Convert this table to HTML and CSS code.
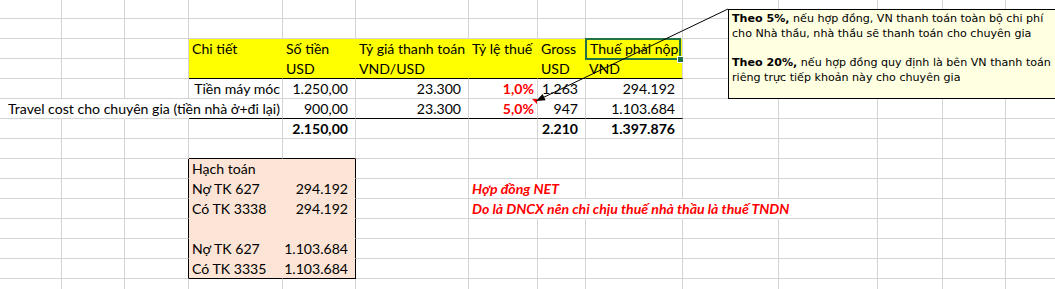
FILE: index.html
```html
<!DOCTYPE html>
<html lang="vi">
<head>
<meta charset="utf-8">
<title>Sheet</title>
<link rel="stylesheet" href="styles.css">
</head>
<body>
<div class="sheet">
  <!-- row 1 -->
  <div class="c"></div><div class="c"></div><div class="c"></div><div class="c"></div><div class="c"></div><div class="c"></div><div class="c"></div><div class="c"></div><div class="c"></div><div class="c"></div><div class="c"></div><div class="c"></div><div class="c"></div><div class="c"></div>
  <!-- row 2 -->
  <div class="c"></div><div class="c"></div><div class="c"></div><div class="c"></div><div class="c"></div><div class="c"></div><div class="c"></div><div class="c"></div><div class="c"></div><div class="c"></div><div class="c"></div><div class="c"></div><div class="c"></div><div class="c"></div>
  <!-- row 3 header -->
  <div class="c"></div><div class="c"></div><div class="c"></div>
  <div class="c y">Chi tiết</div><div class="c y">Số tiền</div><div class="c y">Tỷ giá thanh toán</div><div class="c y">Tỷ lệ thuế</div><div class="c y">Gross</div><div class="c y yl sel">Thuế phải nộp</div>
  <div class="c"></div><div class="c"></div><div class="c"></div><div class="c"></div><div class="c"></div>
  <!-- row 4 header -->
  <div class="c"></div><div class="c"></div><div class="c"></div>
  <div class="c y bb"></div><div class="c y bb">USD</div><div class="c y bb">VND/USD</div><div class="c y bb"></div><div class="c y bb">USD</div><div class="c y bb yl">VND</div>
  <div class="c"></div><div class="c"></div><div class="c"></div><div class="c"></div><div class="c"></div>
  <!-- row 5 -->
  <div class="c"></div><div class="c"></div><div class="c"></div>
  <div class="c r">Tiền máy móc</div><div class="c n">1.250,00</div><div class="c n">23.300</div><div class="c pct red">1,0%</div><div class="c n">1.263</div><div class="c n">294.192</div>
  <div class="c"></div><div class="c"></div><div class="c"></div><div class="c"></div><div class="c"></div>
  <!-- row 6 -->
  <div class="c nr"></div><div class="c nr"></div><div class="c nr"></div>
  <div class="c r bb">Travel cost cho chuyên gia (tiền nhà ở+đi lại)</div><div class="c n bb">900,00</div><div class="c n bb">23.300</div><div class="c pct red bb flag">5,0%</div><div class="c n bb">947</div><div class="c n bb">1.103.684</div>
  <div class="c"></div><div class="c"></div><div class="c"></div><div class="c"></div><div class="c"></div>
  <!-- row 7 totals -->
  <div class="c"></div><div class="c"></div><div class="c"></div>
  <div class="c"></div><div class="c n b">2.150,00</div><div class="c"></div><div class="c"></div><div class="c n b">2.210</div><div class="c n b">1.397.876</div>
  <div class="c"></div><div class="c"></div><div class="c"></div><div class="c"></div><div class="c"></div>
  <!-- row 8 -->
  <div class="c"></div><div class="c"></div><div class="c"></div>
  <div class="c bb"></div><div class="c bb"></div>
  <div class="c"></div><div class="c"></div><div class="c"></div><div class="c"></div><div class="c"></div><div class="c"></div><div class="c"></div><div class="c"></div><div class="c"></div>
  <!-- row 9 -->
  <div class="c"></div><div class="c"></div><div class="c rb"></div>
  <div class="c pk">Hạch toán</div><div class="c pk pke"></div>
  <div class="c"></div><div class="c"></div><div class="c"></div><div class="c"></div><div class="c"></div><div class="c"></div><div class="c"></div><div class="c"></div><div class="c"></div>
  <!-- row 10 -->
  <div class="c"></div><div class="c"></div><div class="c rb"></div>
  <div class="c pk">Nợ TK 627</div><div class="c pk pke n">294.192</div>
  <div class="c"></div><div class="c nr note-text">Hợp đồng NET</div><div class="c"></div><div class="c"></div><div class="c"></div><div class="c"></div><div class="c"></div><div class="c"></div><div class="c"></div>
  <!-- row 11 -->
  <div class="c"></div><div class="c"></div><div class="c rb"></div>
  <div class="c pk">Có TK 3338</div><div class="c pk pke n">294.192</div>
  <div class="c"></div><div class="c nr note-text">Do là DNCX nên chỉ chịu thuế nhà thầu là thuế TNDN</div><div class="c nr"></div><div class="c nr"></div><div class="c nr"></div><div class="c"></div><div class="c"></div><div class="c"></div><div class="c"></div>
  <!-- row 12 -->
  <div class="c"></div><div class="c"></div><div class="c rb"></div>
  <div class="c pk"></div><div class="c pk pke"></div>
  <div class="c"></div><div class="c"></div><div class="c"></div><div class="c"></div><div class="c"></div><div class="c"></div><div class="c"></div><div class="c"></div><div class="c"></div>
  <!-- row 13 -->
  <div class="c"></div><div class="c"></div><div class="c rb"></div>
  <div class="c pk">Nợ TK 627</div><div class="c pk pke n">1.103.684</div>
  <div class="c"></div><div class="c"></div><div class="c"></div><div class="c"></div><div class="c"></div><div class="c"></div><div class="c"></div><div class="c"></div><div class="c"></div>
  <!-- row 14 -->
  <div class="c"></div><div class="c"></div><div class="c rb"></div>
  <div class="c pk bb">Có TK 3335</div><div class="c pk pke bb n">1.103.684</div>
  <div class="c"></div><div class="c"></div><div class="c"></div><div class="c"></div><div class="c"></div><div class="c"></div><div class="c"></div><div class="c"></div><div class="c"></div>
  <!-- row 15 -->
  <div class="c"></div><div class="c"></div><div class="c"></div><div class="c"></div><div class="c"></div><div class="c"></div><div class="c"></div><div class="c"></div><div class="c"></div><div class="c"></div><div class="c"></div><div class="c"></div><div class="c"></div><div class="c"></div>

  <svg class="arrow" width="1055" height="289" viewBox="0 0 1055 289" aria-hidden="true">
    <line x1="728" y1="9" x2="541" y2="98.6" stroke="#000" stroke-width="1"/>
    <polygon points="536,101 545.6,100.3 542.6,94" fill="#000"/>
  </svg>

  <div class="comment">
    <p><b>Theo 5%,</b> nếu hợp đồng, VN thanh toán toàn bộ chi phí cho Nhà thầu, nhà thầu sẽ thanh toán cho chuyên gia</p>
    <p><b>Theo 20%,</b> nếu hợp đồng quy định là bên VN thanh toán riêng trực tiếp khoản này cho chuyên gia</p>
  </div>
</div>
</body>
</html>
```

FILE: styles.css
```css
html, body {
  margin: 0;
  padding: 0;
  background: #ffffff;
  overflow: hidden;
}

.sheet {
  position: relative;
  display: grid;
  grid-template-columns: 62px 63px 64px 94px 73px 113px 69px 48px 97px 96px 99px 65px 63px 64px;
  grid-template-rows: 19px repeat(14, 20px);
  width: max-content;
  font-family: Lato, "Liberation Sans", sans-serif;
  font-size: 14.1px;
  color: #000;
}

.c {
  box-sizing: border-box;
  min-width: 0;
  border-right: 1px solid #d4d4d4;
  border-bottom: 1px solid #d4d4d4;
  display: flex;
  align-items: flex-end;
  padding: 0 2px 1px 3px;
  line-height: 17px;
  white-space: nowrap;
}

/* yellow header */
.y {
  background: #ffff00;
  border-right-color: #ffff00;
  border-bottom-color: #ffff00;
}
.yl {
  border-right-color: #d4d4d4;
}

/* borders */
.bb { border-bottom-color: #000; }
.nr { border-right-color: transparent; }
.rb { border-right-color: #000; }

/* alignment */
.r { justify-content: flex-end; padding-right: 2px; }
.n { justify-content: flex-end; padding-right: 7px; }
.pct { justify-content: flex-end; padding-right: 3px; }
.b { font-weight: 700; }
.red { color: #ff0000; font-weight: 700; }

/* peach ledger box */
.pk {
  background: #fce4d6;
  border-right-color: #fce4d6;
  border-bottom-color: #fce4d6;
}
.pk.pke { border-right-color: #000; }
.pk.bb { border-bottom-color: #000; }

.note-text {
  color: #ff0000;
  font-weight: 700;
  font-style: italic;
  padding-left: 3px;
}

/* comment indicator */
.flag { position: relative; }
.flag::after {
  content: "";
  position: absolute;
  top: 0;
  right: 0;
  border-left: 5px solid transparent;
  border-top: 5px solid #ff0000;
}

/* active cell selection */
.sel { position: relative; padding-left: 4px; }
.sel::after {
  content: "";
  position: absolute;
  left: -1px;
  top: -1px;
  width: 96px;
  height: 22px;
  box-sizing: border-box;
  border: 2px solid #217346;
}
.sel::before {
  content: "";
  position: absolute;
  left: 92px;
  top: 18px;
  width: 5px;
  height: 5px;
  background: #217346;
  box-shadow: 0 0 0 1px #ffffff;
  z-index: 2;
}

.arrow {
  position: absolute;
  left: 0;
  top: 0;
  pointer-events: none;
}

.comment {
  position: absolute;
  left: 728px;
  top: 9px;
  width: 340px;
  height: 90px;
  box-sizing: border-box;
  border: 1px solid #000;
  background: #ffffe1;
  padding: 2px 3px 0;
  font-family: "DejaVu Sans", Verdana, sans-serif;
  font-size: 11.1px;
  line-height: 14.75px;
  color: #000;
}
.comment p {
  margin: 0 0 14.75px 0;
  width: 322px;
}
.comment b { font-weight: 700; }
```
